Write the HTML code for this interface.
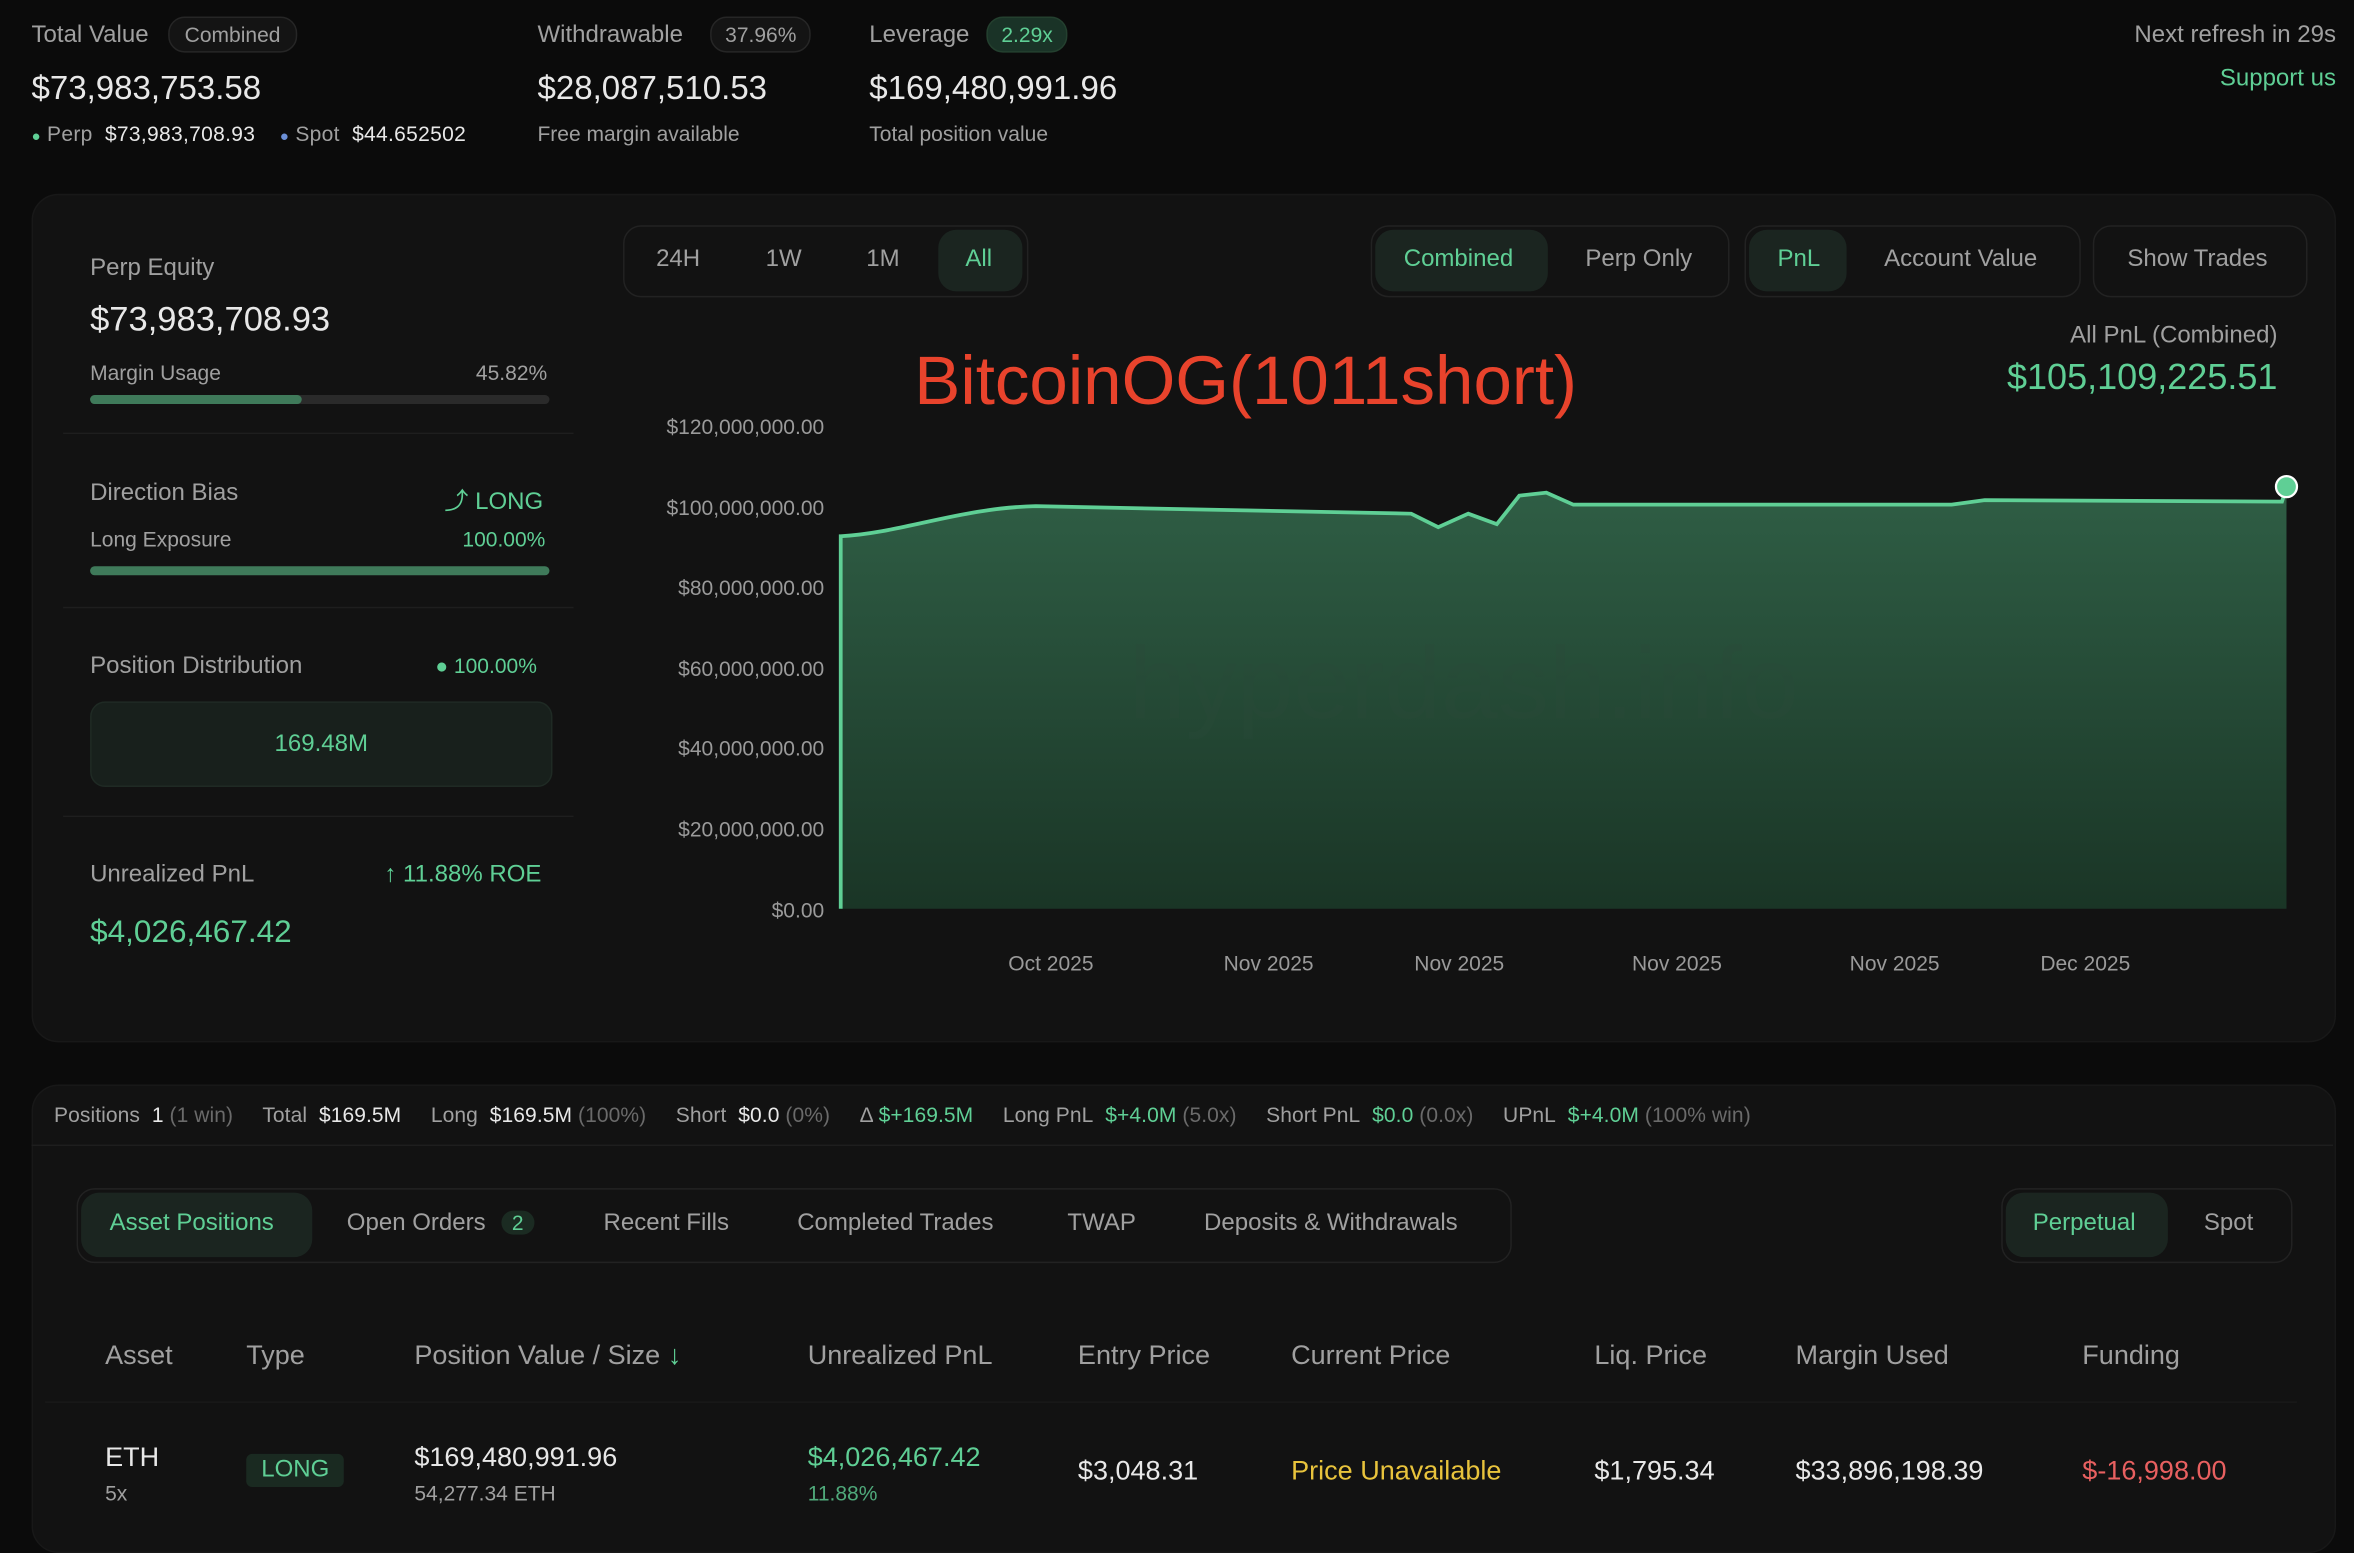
<!DOCTYPE html>
<html><head><meta charset="utf-8"><style>
html,body{margin:0;padding:0;background:#0b0b0b;overflow:hidden}
body{width:2354px;height:1532px}
#w{position:absolute;left:0;top:0;width:1568px;height:1020px;transform:scale(1.5013,1.502);transform-origin:0 0;font-family:"Liberation Sans",sans-serif;color:#e8e8e8}
.a{position:absolute;white-space:nowrap}
.g{color:#5fcf95}.m{color:#a0a0a0}.d{color:#6a6a6a}
.pill{position:absolute;border:1px solid #222;border-radius:12px;background:#121212}
.card{position:absolute;background:#121212;border-radius:18px;border:1px solid #181818}
.sel{position:absolute;background:#1b2520;border-radius:12px}
.bar{position:absolute;height:6px;border-radius:3px;background:#2a2a2a}
.hr{position:absolute;height:1px;background:#1e1e1e}
</style></head><body><div id="w">
<!-- top -->
<div class="a m" style="left:21px;top:15px;font-size:16px">Total Value</div>
<div class="a m" style="left:112px;top:11px;border:1px solid #262626;background:#141414;border-radius:11px;padding:3px 10px;font-size:14px">Combined</div>
<div class="a" style="left:21px;top:46px;font-size:22px">$73,983,753.58</div>
<div class="a" style="left:21px;top:81px;font-size:14px;letter-spacing:.2px"><span class="g" style="font-size:10px">●</span> <span class="m">Perp</span>&nbsp; $73,983,708.93 &nbsp;&nbsp;&nbsp;<span style="color:#6b8fd6;font-size:10px">●</span> <span class="m">Spot</span>&nbsp; $44.652502</div>
<div class="a m" style="left:358px;top:15px;font-size:16px">Withdrawable</div>
<div class="a m" style="left:473px;top:11px;border:1px solid #262626;background:#141414;border-radius:11px;padding:3px 9px;font-size:14px">37.96%</div>
<div class="a" style="left:358px;top:46px;font-size:22px">$28,087,510.53</div>
<div class="a m" style="left:358px;top:81px;font-size:14px">Free margin available</div>
<div class="a m" style="left:579px;top:15px;font-size:16px">Leverage</div>
<div class="a g" style="left:657px;top:11px;background:#1a3327;border:1px solid #24402f;border-radius:11px;padding:3px 9px;font-size:14px">2.29x</div>
<div class="a" style="left:579px;top:46px;font-size:22px">$169,480,991.96</div>
<div class="a m" style="left:579px;top:81px;font-size:14px">Total position value</div>
<div class="a m" style="right:12px;top:15px;font-size:16px">Next refresh in 29s</div>
<div class="a g" style="right:12px;top:44px;font-size:16px">Support us</div>

<!-- main card -->
<div class="card" style="left:21px;top:129px;width:1533px;height:563px"></div>
<div class="a m" style="left:60px;top:170px;font-size:16px">Perp Equity</div>
<div class="a" style="left:60px;top:199px;font-size:23px">$73,983,708.93</div>
<div class="a m" style="left:60px;top:240px;font-size:14px">Margin Usage</div>
<div class="a m" style="left:317px;top:240px;font-size:14px">45.82%</div>
<div class="bar" style="left:60px;top:263px;width:306px"></div>
<div class="bar" style="left:60px;top:263px;width:141px;background:#3f7a5a"></div>
<div class="hr" style="left:42px;top:288px;width:340px"></div>
<div class="a m" style="left:60px;top:320px;font-size:16px">Direction Bias</div>
<div class="a g" style="left:296px;top:320px;font-size:16px">⤴ LONG</div>
<div class="a m" style="left:60px;top:351px;font-size:14px">Long Exposure</div>
<div class="a g" style="left:308px;top:351px;font-size:14px">100.00%</div>
<div class="bar" style="left:60px;top:377px;width:306px;background:#3f7a5a"></div>
<div class="hr" style="left:42px;top:404px;width:340px"></div>
<div class="a m" style="left:60px;top:435px;font-size:16px">Position Distribution</div>
<div class="a g" style="left:290px;top:435px;font-size:14px">● 100.00%</div>
<div class="a g" style="left:60px;top:467px;width:306px;height:55px;background:#18201c;border-radius:10px;border:1px solid #1f2a24;text-align:center;line-height:55px;font-size:16px">169.48M</div>
<div class="hr" style="left:42px;top:543px;width:340px"></div>
<div class="a m" style="left:60px;top:574px;font-size:16px">Unrealized PnL</div>
<div class="a g" style="left:256px;top:574px;font-size:16px">↑ 11.88% ROE</div>
<div class="a g" style="left:60px;top:609px;font-size:21px">$4,026,467.42</div>

<!-- chart controls -->
<div class="pill" style="left:415px;top:150px;width:268px;height:46px"></div>
<div class="sel" style="left:625px;top:153px;width:56px;height:41px"></div>
<div class="a m" style="left:437px;top:164px;font-size:16px">24H</div>
<div class="a m" style="left:510px;top:164px;font-size:16px">1W</div>
<div class="a m" style="left:577px;top:164px;font-size:16px">1M</div>
<div class="a g" style="left:643px;top:164px;font-size:16px">All</div>
<div class="pill" style="left:913px;top:150px;width:237px;height:46px"></div>
<div class="sel" style="left:916px;top:153px;width:115px;height:41px"></div>
<div class="a g" style="left:935px;top:164px;font-size:16px">Combined</div>
<div class="a m" style="left:1056px;top:164px;font-size:16px">Perp Only</div>
<div class="pill" style="left:1162px;top:150px;width:222px;height:46px"></div>
<div class="sel" style="left:1165px;top:153px;width:65px;height:41px"></div>
<div class="a g" style="left:1184px;top:164px;font-size:16px">PnL</div>
<div class="a m" style="left:1255px;top:164px;font-size:16px">Account Value</div>
<div class="pill" style="left:1394px;top:150px;width:141px;height:46px"></div>
<div class="a m" style="left:1417px;top:164px;font-size:16px">Show Trades</div>
<div class="a m" style="right:51px;top:215px;font-size:16px">All PnL (Combined)</div>
<div class="a g" style="right:51px;top:238px;font-size:24px">$105,109,225.51</div>
<div class="a" style="left:609px;top:226px;font-size:46px;color:#e8432c">BitcoinOG(1011short)</div>

<svg class="a" style="left:0;top:0" width="1568" height="700">
<defs><linearGradient id="gr" x1="0" y1="0" x2="0" y2="1"><stop offset="0" stop-color="#2f5e45"/><stop offset="1" stop-color="#1a3526"/></linearGradient></defs>
<g fill="#9a9a9a" font-family="Liberation Sans" font-size="14" text-anchor="end">
<text x="549" y="289">$120,000,000.00</text><text x="549" y="343">$100,000,000.00</text><text x="549" y="396">$80,000,000.00</text><text x="549" y="450">$60,000,000.00</text><text x="549" y="503">$40,000,000.00</text><text x="549" y="557">$20,000,000.00</text><text x="549" y="611">$0.00</text></g>
<g fill="#9a9a9a" font-family="Liberation Sans" font-size="14" text-anchor="middle">
<text x="700" y="646">Oct 2025</text><text x="845" y="646">Nov 2025</text><text x="972" y="646">Nov 2025</text><text x="1117" y="646">Nov 2025</text><text x="1262" y="646">Nov 2025</text><text x="1389" y="646">Dec 2025</text></g>
<path d="M560,605 L560,357 C600,355 640,338 690,337 L940,342 L958,351 L978,342 L997,349 L1012,330 L1030,328 L1048,336 L1300,336 L1322,333 L1520,334 L1523,324 L1523,605 Z" fill="url(#gr)"/>
<path d="M560,605 L560,357 C600,355 640,338 690,337 L940,342 L958,351 L978,342 L997,349 L1012,330 L1030,328 L1048,336 L1300,336 L1322,333 L1520,334 L1523,324" fill="none" stroke="#5fcf95" stroke-width="2.5"/>
<circle cx="1523" cy="324" r="7" fill="#5fcf95" stroke="#fff" stroke-width="1.5"/>
<text x="975" y="478" fill="#2a4a39" font-family="Liberation Sans" font-size="68" text-anchor="middle" opacity=".35">hyperdash.info</text>
</svg>

<!-- positions card -->
<div class="card" style="left:21px;top:722px;width:1533px;height:310px"></div>
<div class="a" style="left:36px;top:734px;font-size:14px;letter-spacing:.05px"><span class="m">Positions</span>&nbsp; 1 <span class="d">(1 win)</span>&nbsp;&nbsp;&nbsp;&nbsp; <span class="m">Total</span>&nbsp; $169.5M&nbsp;&nbsp;&nbsp;&nbsp; <span class="m">Long</span>&nbsp; $169.5M <span class="d">(100%)</span>&nbsp;&nbsp;&nbsp;&nbsp; <span class="m">Short</span>&nbsp; $0.0 <span class="d">(0%)</span>&nbsp;&nbsp;&nbsp;&nbsp; <span class="m">Δ</span> <span class="g">$+169.5M</span>&nbsp;&nbsp;&nbsp;&nbsp; <span class="m">Long PnL</span>&nbsp; <span class="g">$+4.0M</span> <span class="d">(5.0x)</span>&nbsp;&nbsp;&nbsp;&nbsp; <span class="m">Short PnL</span>&nbsp; <span class="g">$0.0</span> <span class="d">(0.0x)</span>&nbsp;&nbsp;&nbsp;&nbsp; <span class="m">UPnL</span>&nbsp; <span class="g">$+4.0M</span> <span class="d">(100% win)</span></div>
<div class="hr" style="left:21px;top:762px;width:1533px"></div>
<div class="pill" style="left:51px;top:791px;width:954px;height:48px"></div>
<div class="sel" style="left:54px;top:794px;width:154px;height:43px"></div>
<div class="a g" style="left:73px;top:806px;font-size:16px">Asset Positions</div>
<div class="a m" style="left:231px;top:806px;font-size:16px">Open Orders <span class="g" style="display:inline-block;background:#1b2b22;border-radius:10px;padding:0 7px;font-size:14px;margin-left:6px">2</span></div>
<div class="a m" style="left:402px;top:806px;font-size:16px">Recent Fills</div>
<div class="a m" style="left:531px;top:806px;font-size:16px">Completed Trades</div>
<div class="a m" style="left:711px;top:806px;font-size:16px">TWAP</div>
<div class="a m" style="left:802px;top:806px;font-size:16px">Deposits &amp; Withdrawals</div>
<div class="pill" style="left:1333px;top:791px;width:192px;height:48px"></div>
<div class="sel" style="left:1336px;top:794px;width:108px;height:43px"></div>
<div class="a g" style="left:1354px;top:806px;font-size:16px">Perpetual</div>
<div class="a m" style="left:1468px;top:806px;font-size:16px">Spot</div>
<div class="a m" style="top:892px;left:70px;font-size:18px">Asset</div>
<div class="a m" style="top:892px;left:164px;font-size:18px">Type</div>
<div class="a m" style="top:892px;left:276px;font-size:18px">Position Value / Size <span class="g">↓</span></div>
<div class="a m" style="top:892px;left:538px;font-size:18px">Unrealized PnL</div>
<div class="a m" style="top:892px;left:718px;font-size:18px">Entry Price</div>
<div class="a m" style="top:892px;left:860px;font-size:18px">Current Price</div>
<div class="a m" style="top:892px;left:1062px;font-size:18px">Liq. Price</div>
<div class="a m" style="top:892px;left:1196px;font-size:18px">Margin Used</div>
<div class="a m" style="top:892px;left:1387px;font-size:18px">Funding</div>
<div class="hr" style="left:30px;top:933px;width:1500px;background:#191919"></div>
<div class="a" style="top:960px;left:70px;font-size:18px">ETH</div>
<div class="a m" style="top:986px;left:70px;font-size:14px">5x</div>
<div class="a g" style="top:968px;left:164px;font-size:16px;background:#1a2a21;border-radius:4px;padding:2px 10px">LONG</div>
<div class="a" style="top:960px;left:276px;font-size:18px">$169,480,991.96</div>
<div class="a m" style="top:986px;left:276px;font-size:14px">54,277.34 ETH</div>
<div class="a g" style="top:960px;left:538px;font-size:18px">$4,026,467.42</div>
<div class="a g" style="top:986px;left:538px;font-size:14px;opacity:.8">11.88%</div>
<div class="a" style="top:969px;left:718px;font-size:18px">$3,048.31</div>
<div class="a" style="top:969px;left:860px;font-size:18px;color:#e8c33c">Price Unavailable</div>
<div class="a" style="top:969px;left:1062px;font-size:18px">$1,795.34</div>
<div class="a" style="top:969px;left:1196px;font-size:18px">$33,896,198.39</div>
<div class="a" style="top:969px;left:1387px;font-size:18px;color:#e86060">$-16,998.00</div>
</div></body></html>
